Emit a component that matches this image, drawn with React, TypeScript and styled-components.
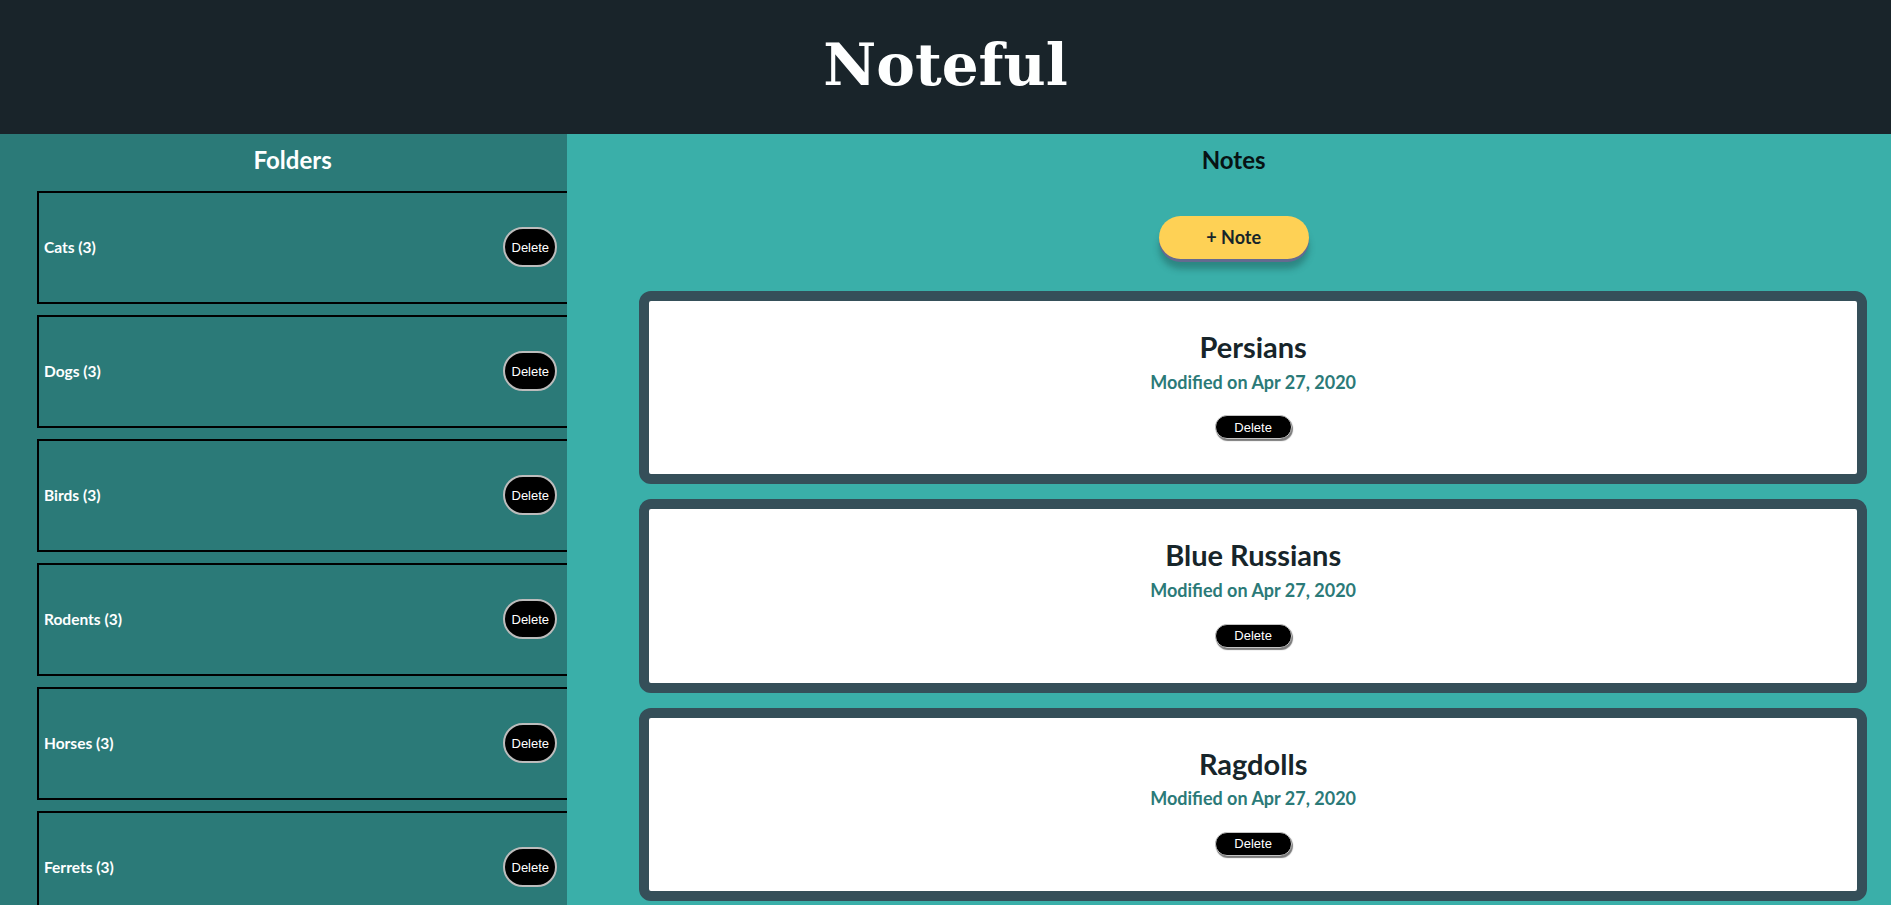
import React from "react";
import styled, { createGlobalStyle } from "styled-components";

const palette = {
  ink: "#17252a",
  header: "#19242a",
  sidebar: "#2b7a78",
  main: "#3aafa9",
  slate: "#354f59",
  yellow: "#fed155",
  white: "#feffff",
};

const GlobalStyle = createGlobalStyle`
  html, body {
    margin: 0;
    padding: 0;
    height: 100%;
    overflow: hidden;
  }
  body {
    font-family: Lato, "Open Sans", sans-serif;
  }
  * {
    box-sizing: border-box;
  }
`;

const Page = styled.div`
  display: flex;
  flex-direction: column;
  height: 905px;
`;

const Header = styled.header`
  height: 134px;
  flex-shrink: 0;
  display: flex;
  align-items: center;
  justify-content: center;
  background-color: ${palette.header};
`;

const Title = styled.h1`
  margin: 0 0 4px;
  font-family: "DejaVu Serif", "Liberation Serif", serif;
  font-weight: 700;
  font-size: 58px;
  color: ${palette.white};
`;

const Body = styled.div`
  flex: 1;
  display: flex;
  min-height: 0;
`;

const Sidebar = styled.nav`
  width: 30%;
  flex-shrink: 0;
  overflow: hidden;
  background-color: ${palette.sidebar};
`;

const SectionTitle = styled.h2<{ light?: boolean }>`
  flex-shrink: 0;
  margin: 12px 0 0;
  padding-left: ${(props) => (props.light ? "18px" : "0")};
  font-size: 24px;
  line-height: 1.2;
  font-weight: 700;
  text-align: center;
  color: ${(props) => (props.light ? palette.white : "#071314")};
`;

const FolderList = styled.ul`
  list-style: none;
  margin: 16px 0 0;
  padding: 0 0 0 37px;
`;

const FolderItem = styled.li`
  display: flex;
  align-items: center;
  justify-content: space-between;
  height: 113px;
  margin: 0 -12px 11px 0;
  padding: 0 20px 0 5px;
  border: 2px solid #000;
`;

const FolderName = styled.span`
  font-size: 15.5px;
  font-weight: 700;
  color: ${palette.white};
`;

const FolderDelete = styled.button`
  width: 54px;
  height: 40px;
  padding: 0;
  border-radius: 20px;
  border: 2px solid #bcbcbc;
  background-color: #000;
  color: #fff;
  font-family: "Liberation Sans", Arial, sans-serif;
  font-size: 13px;
`;

const Main = styled.main`
  flex: 1;
  overflow: hidden;
  padding-left: 9px;
  background-color: ${palette.main};
  display: flex;
  flex-direction: column;
  align-items: center;
`;

const AddNote = styled.button`
  flex-shrink: 0;
  width: 150px;
  height: 43px;
  margin-top: 41px;
  border: none;
  border-radius: 22px;
  background-color: ${palette.yellow};
  color: ${palette.ink};
  font-family: Lato, sans-serif;
  font-size: 18px;
  font-weight: 700;
  box-shadow: 0 3px 0 #646a90, 0 10px 6px rgba(20, 60, 60, 0.35);
`;

const NoteList = styled.ul`
  flex-shrink: 0;
  list-style: none;
  align-self: stretch;
  margin: 32px 0 0;
  padding: 0 24px 0 63px;
`;

const NoteCard = styled.li`
  margin-bottom: 15px;
  border: 10px solid ${palette.slate};
  border-radius: 12px;
  background-color: #fff;
  padding: 29px 0 35px;
  display: flex;
  flex-direction: column;
  align-items: center;
`;

const NoteTitle = styled.h3`
  margin: 0;
  font-size: 29px;
  line-height: 1.2;
  font-weight: 700;
  color: ${palette.ink};
`;

const NoteModified = styled.p`
  margin: 7px 0 0;
  font-size: 18px;
  line-height: 1.2;
  font-weight: 700;
  color: ${palette.sidebar};
`;

const NoteDelete = styled.button`
  width: 77px;
  height: 24px;
  margin-top: 22px;
  padding: 0;
  border: 1px solid #c4c4c4;
  border-radius: 12px;
  background-color: #000;
  color: #fff;
  font-family: "Liberation Sans", Arial, sans-serif;
  font-size: 13px;
  box-shadow: 1px 2px 1px #7a7a7a;
`;

const folders = ["Cats", "Dogs", "Birds", "Rodents", "Horses", "Ferrets"];
const notes = ["Persians", "Blue Russians", "Ragdolls"];

const App: React.FC = () => {
  return (
    <Page>
      <GlobalStyle />
      <Header>
        <Title>Noteful</Title>
      </Header>
      <Body>
        <Sidebar>
          <SectionTitle light>Folders</SectionTitle>
          <FolderList>
            {folders.map((name) => (
              <FolderItem key={name}>
                <FolderName>{name} (3)</FolderName>
                <FolderDelete>Delete</FolderDelete>
              </FolderItem>
            ))}
          </FolderList>
        </Sidebar>
        <Main>
          <SectionTitle>Notes</SectionTitle>
          <AddNote>+ Note</AddNote>
          <NoteList>
            {notes.map((name) => (
              <NoteCard key={name}>
                <NoteTitle>{name}</NoteTitle>
                <NoteModified>Modified on Apr 27, 2020</NoteModified>
                <NoteDelete>Delete</NoteDelete>
              </NoteCard>
            ))}
          </NoteList>
        </Main>
      </Body>
    </Page>
  );
};

export default App;
